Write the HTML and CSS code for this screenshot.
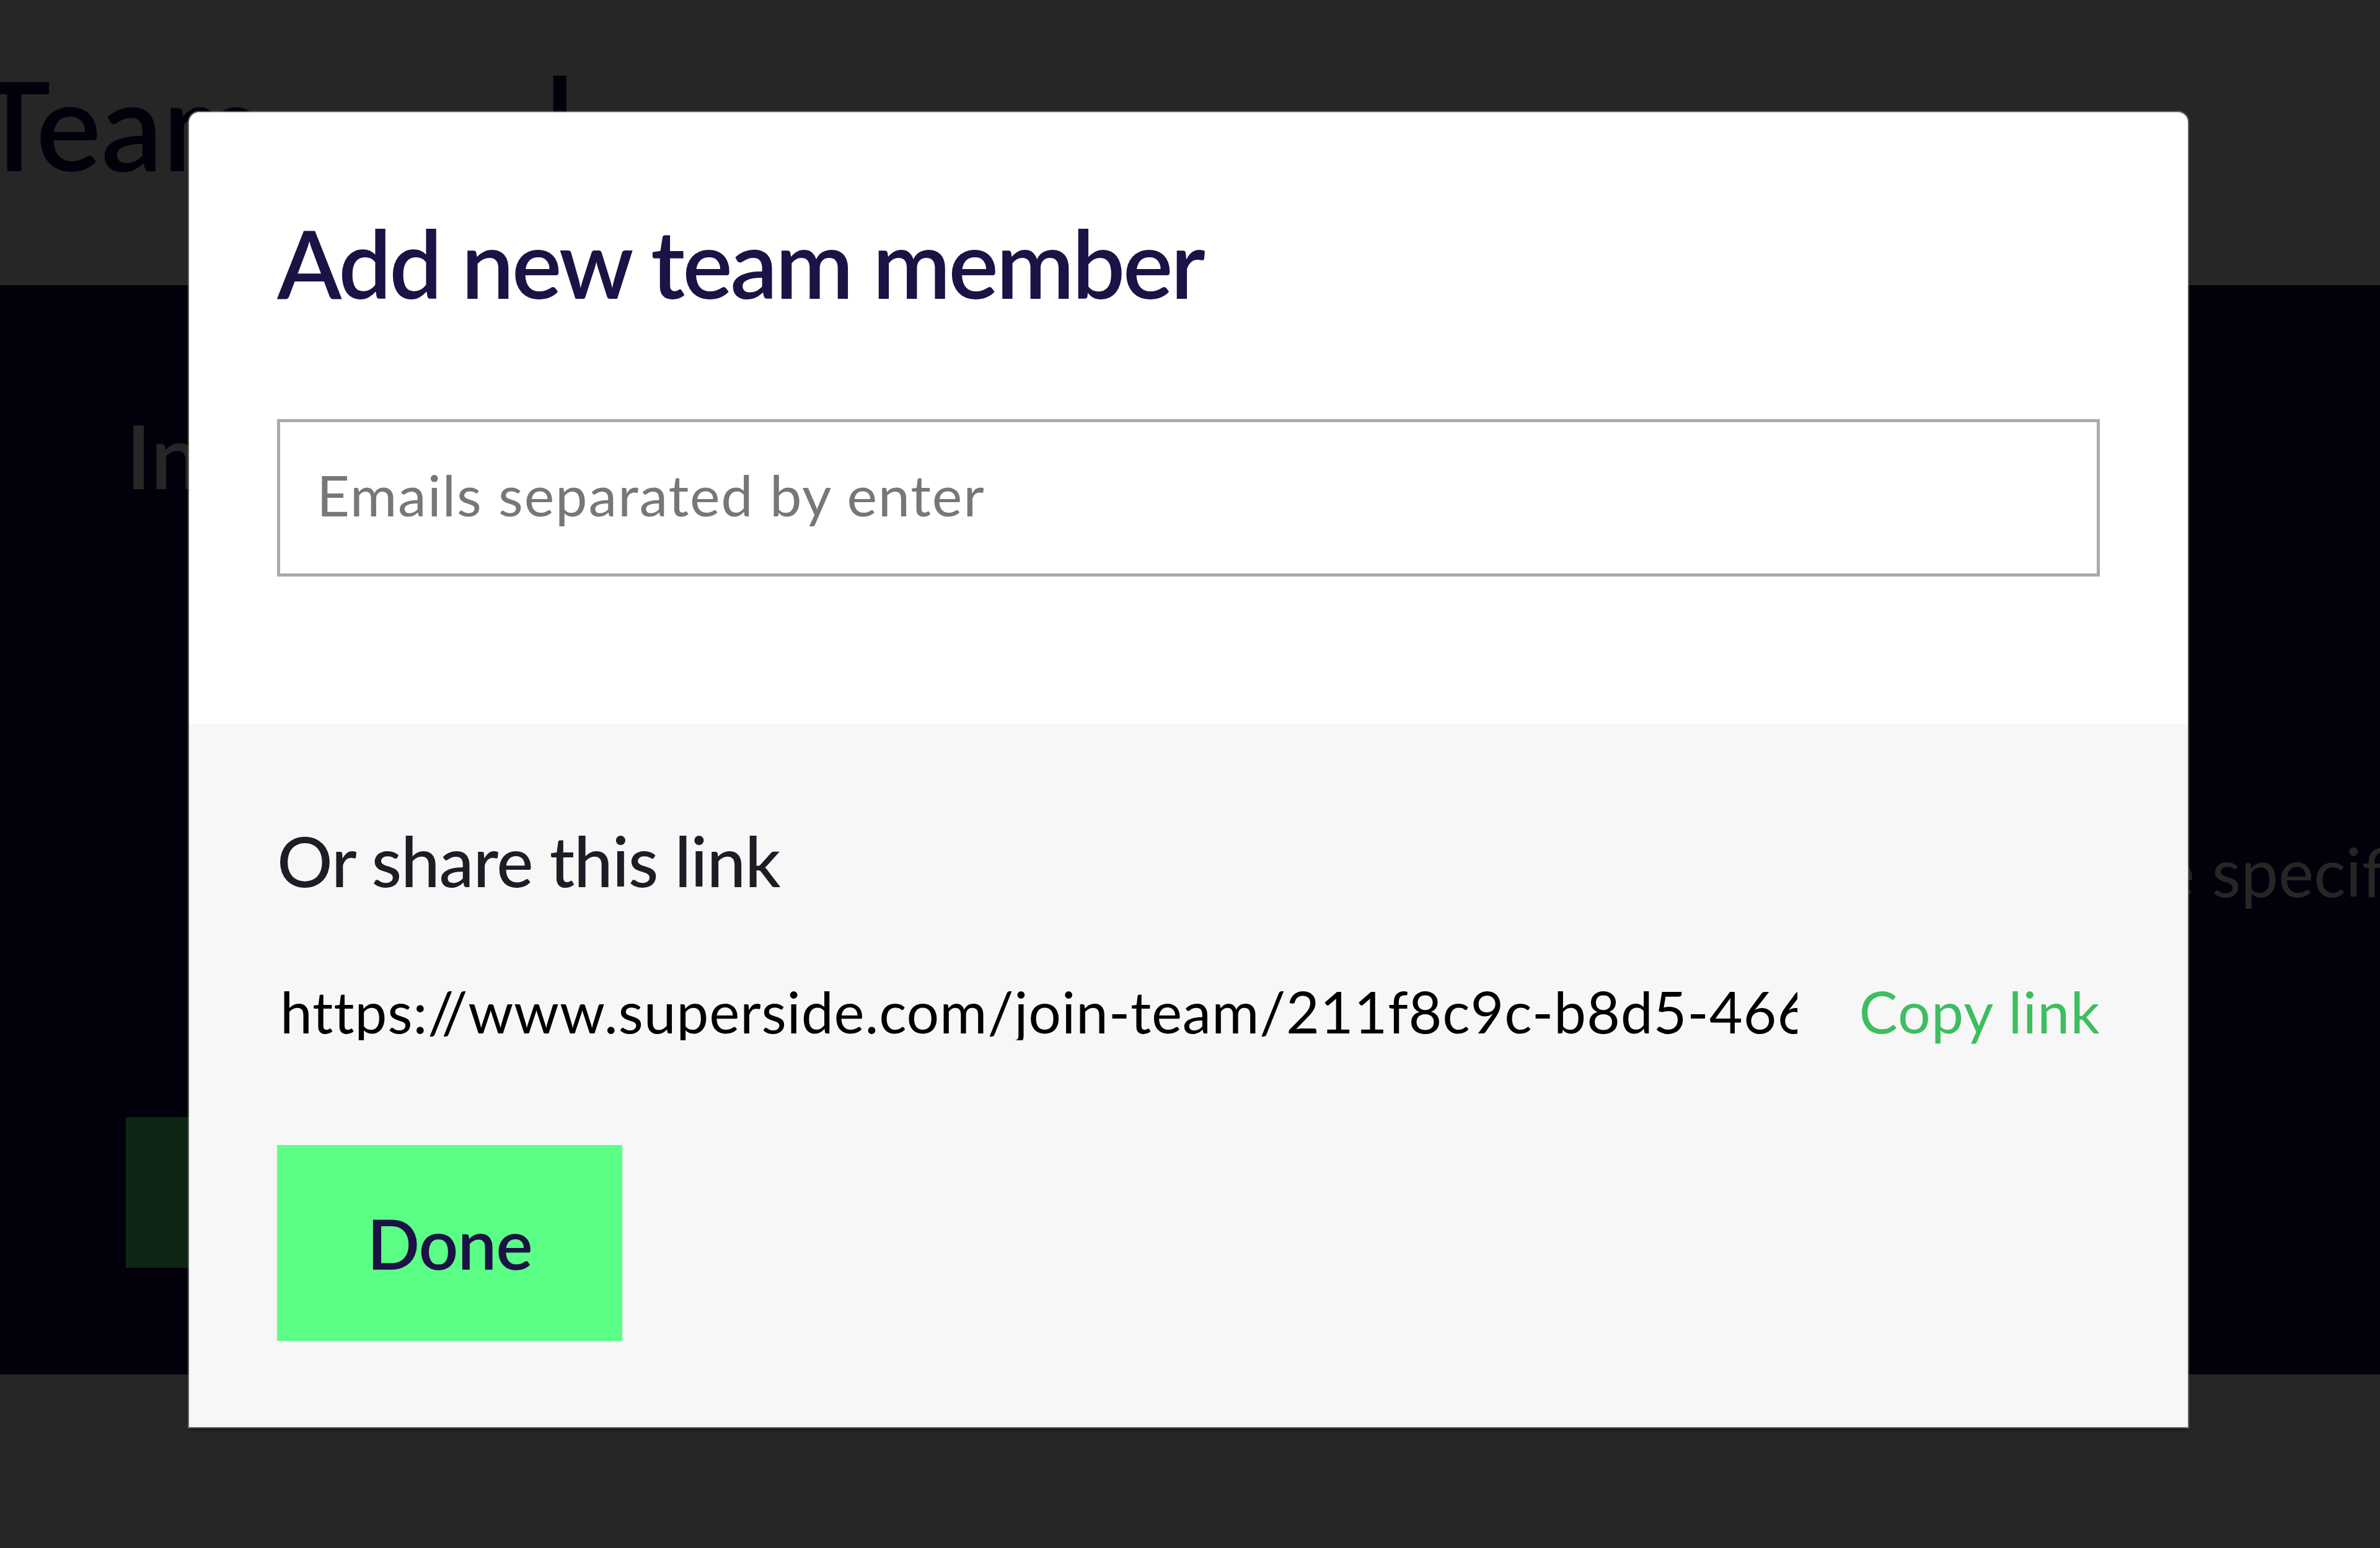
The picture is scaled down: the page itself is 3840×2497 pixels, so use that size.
FILE: index.html
```html
<!DOCTYPE html>
<html lang="en">
<head>
<meta charset="utf-8">
<title>Team – Add new team member</title>
<link rel="stylesheet" href="styles.css">
</head>
<body>
<div class="page">
  <header class="page-header">
    <h1 class="page-title">Team<span class="page-title-sep" aria-hidden="true">|</span></h1>
  </header>
  <section class="invite">
    <div class="invite-main">
      <h2 class="invite-title">Invite your team</h2>
      <button class="invite-button" type="button">Add member</button>
    </div>
    <p class="invite-note">the specific projects they need access to</p>
  </section>
  <div class="page-rest"></div>
</div>

<div class="overlay">
  <div class="modal" role="dialog" aria-labelledby="modal-title">
    <div class="modal-body">
      <h2 class="modal-title" id="modal-title">Add new team member</h2>
      <input class="email-input" type="text" placeholder="Emails separated by enter">
    </div>
    <div class="modal-footer">
      <h3 class="share-title">Or share this link</h3>
      <div class="share-row">
        <span class="share-url">https://www.superside.com/join-team/211f8c9c-b8d5-4663-9a1e-7f2c4b8d0e15</span>
        <a class="copy-link" href="#">Copy link</a>
      </div>
      <button class="done-button" type="button">Done</button>
    </div>
  </div>
</div>
</body>
</html>
```

FILE: styles.css
```css
html, body {
  margin: 0;
  padding: 0;
}

body {
  width: 3840px;
  height: 2497px;
  overflow: hidden;
  font-family: Lato, "Open Sans", "Liberation Sans", sans-serif;
  background: #ffffff;
}

/* ---------- background page ---------- */
.page {
  display: flex;
  flex-direction: column;
  height: 2497px;
}

.page-header {
  height: 460px;
  box-sizing: border-box;
  padding-top: 101px;
  background: #ffffff;
  flex: none;
}

.page-title {
  margin: 0 0 0 -36px;
  font-size: 198px;
  line-height: 1;
  font-weight: 600;
  color: #0e074a;
  white-space: nowrap;
}

.page-title-sep {
  margin-left: 450px;
  font-weight: 900;
}

.invite {
  height: 1757px;
  flex: none;
  box-sizing: border-box;
  padding: 188px 0 0 203px;
  background: #0e074a;
  display: flex;
  gap: 90px;
}

.invite-main {
  width: 3092px;
  flex: none;
  display: flex;
  flex-direction: column;
  align-items: flex-start;
}

.invite-title {
  margin: 0;
  font-size: 143px;
  line-height: 1.2;
  font-weight: 600;
  color: #ffffff;
  white-space: nowrap;
}

.invite-button {
  margin-top: 982px;
  width: 900px;
  height: 243px;
  border: 0;
  background: #5cff86;
  color: #1c1245;
  font: 600 90px Lato, sans-serif;
}

.invite-note {
  margin: 693px 0 0;
  font-size: 108px;
  line-height: 1.2;
  color: #ffffff;
  white-space: nowrap;
}

.page-rest {
  flex: 1;
  background: #ffffff;
}

/* ---------- modal ---------- */
.overlay {
  position: fixed;
  inset: 0;
  box-sizing: border-box;
  padding: 181px 0 0 305px;
  background: rgba(0, 0, 0, 0.851);
  display: flex;
  align-items: flex-start;
}

.modal {
  width: 3225px;
  border-radius: 16px 16px 0 0;
  overflow: hidden;
  background: #ffffff;
  box-shadow: 0 0 0 2px rgba(150, 150, 150, 0.6), 0 5px 6px rgba(0, 0, 0, 0.5);
}

.modal-body {
  padding: 166px 142px 237px;
}

.modal-title {
  margin: 0;
  font-size: 152px;
  line-height: 1;
  font-weight: 600;
  letter-spacing: -3.7px;
  color: #1c1245;
  white-space: nowrap;
}

.email-input {
  display: block;
  box-sizing: border-box;
  width: 100%;
  height: 254px;
  margin: 177px 0 0;
  padding: 0 64px 12px 59px;
  border: 5px solid #aaaaaa;
  border-radius: 0;
  background: #ffffff;
  outline: none;
  font: 400 92px Lato, "Open Sans", sans-serif;
  letter-spacing: 1.8px;
  color: #333333;
}

.email-input::placeholder {
  color: #777777;
  opacity: 1;
}

.modal-footer {
  background: #f7f7f7;
  padding: 165px 142px 139px;
}

.share-title {
  margin: 0;
  font-size: 112px;
  line-height: 1;
  font-weight: 500;
  letter-spacing: -1.1px;
  color: #1d1d26;
  white-space: nowrap;
}

.share-row {
  display: flex;
  align-items: flex-start;
  gap: 100px;
  margin-top: 141px;
  font-size: 93px;
  line-height: 1;
}

.share-url {
  flex: 1;
  min-width: 0;
  padding-left: 5px;
  overflow: hidden;
  white-space: nowrap;
  letter-spacing: 0.8px;
  color: #000000;
}

.copy-link {
  flex: none;
  letter-spacing: 1.3px;
  margin-right: -1px;
  color: #3ebd61;
  text-decoration: none;
}

.done-button {
  display: block;
  margin-top: 169px;
  width: 557px;
  height: 316px;
  padding: 0;
  border: 0;
  background: #5cff86;
  color: #1c1245;
  font: 600 112px/1 Lato, sans-serif;
  letter-spacing: -1px;
}
```
